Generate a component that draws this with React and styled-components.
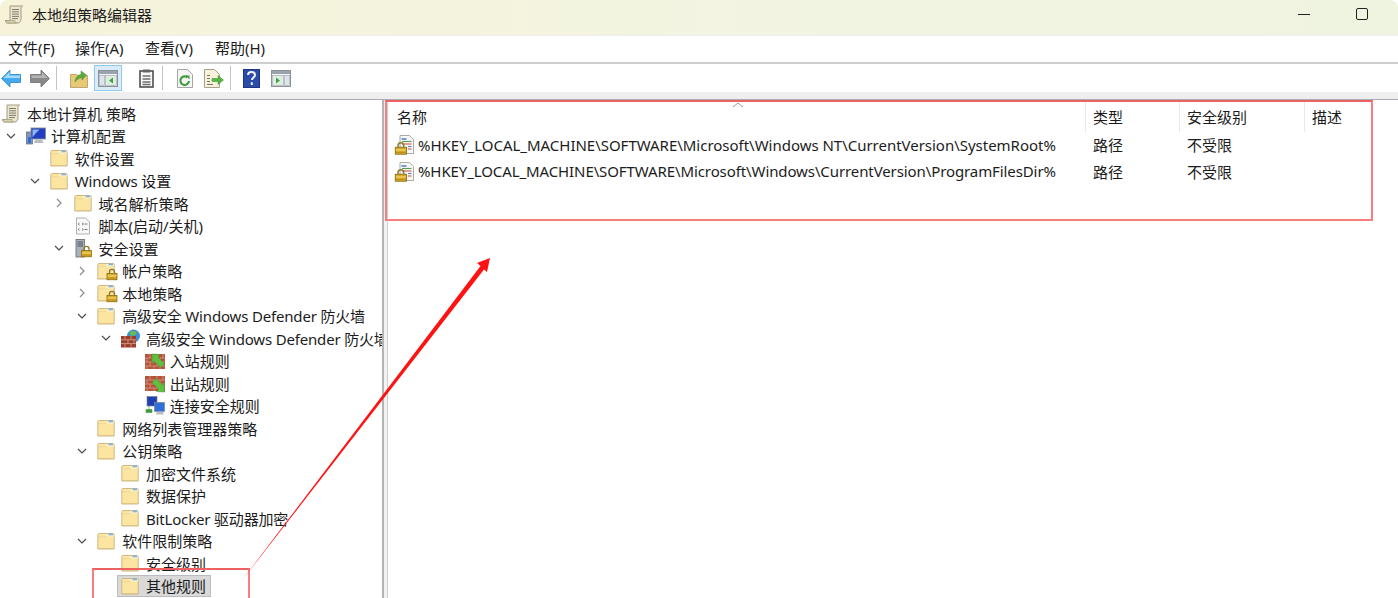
import React from "react";
import styled, {createGlobalStyle} from "styled-components";

const FONT = '"Noto Sans", "Noto Sans CJK SC", sans-serif';

const Global = createGlobalStyle`
  html, body {
    margin: 0;
    padding: 0;
    background: #fff;
  }
  * {
    box-sizing: border-box;
  }
`;

const Icon = styled.svg`
  display: block;
  flex: none;
  overflow: visible;
`;

/* icons */
const LockShape = ({x, y, s = 1}) => (
    <g transform={`translate(${x} ${y}) scale(${s})`}>
        <path d="M1.800 3V1.800a1.900 1.900 0 0 1 3.800 0V3" fill="none" stroke="#8d7a30" strokeWidth="1"/>
        <rect x="0" y="3" width="7.400" height="4.600" fill="#d9ab2a" stroke="#8a6d12" strokeWidth=".6"/>
        <path d="M.5 4.800h6.400" stroke="#f3d873" strokeWidth=".8"/>
        <path d="M.5 6.400h6.400" stroke="#b58a1a" strokeWidth=".6"/>
    </g>
);
const ScrollIcon = () => (
    <Icon width="19" height="19" viewBox="0 0 19 19">
        <path d="M5 1h12.500c-1 .8-1.500 1.800-1.500 3v10c0 2-1.200 4-3 4H2.500C1.200 18 .5 17 .5 15.500H5z" fill="#ece6cd" stroke="#96927a" strokeWidth=".9"/>
        <path d="M.5 15.500H10c0 1 .4 2 1.300 2.500H2.500C1.200 18 .5 17 .5 15.500z" fill="#d8cfa8" stroke="#96927a" strokeWidth=".6"/>
        <path d="M7 4.500h7M7 6.800h7M7 9.100h7M7 11.400h7M7 13.600h6" stroke="#7d7b6c" strokeWidth="1"/>
    </Icon>
);
const ComputerIcon = () => (
    <Icon width="20" height="18" viewBox="0 0 20 18">
        <rect x=".5" y="5" width="6" height="12" fill="#8296b8" stroke="#5a6780" strokeWidth=".7"/>
        <rect x="5" y="1" width="14.500" height="11" fill="#1f3fc0" stroke="#8a8f99" strokeWidth=".9"/>
        <path d="M6.500 2.500h7l-4 4-3 4z" fill="#8fb5f2"/>
        <path d="M9 12.500h7l1.500 3.500H8z" fill="#b7bcc4"/>
        <rect x="2" y="10" width="3" height="6" fill="#2f6fd0"/>
    </Icon>
);
const FolderIcon = ({lock}) => (
    <Icon width="18" height="18" viewBox="0 0 18 18">
        <path d="M.8 3c0-1 .5-1.500 1.200-1.500h14c.7 0 1.200.5 1.200 1.500v14H.8z" fill="#fbe5a0" stroke="#c9b27c" strokeWidth=".9"/>
        <path d="M1.300 4.500h15.400V3c0-.6-.3-1-.8-1H9.800L8.500 4z" fill="#fdf4cf"/>
        <path d="M1.300 4.700h8l1-1.200" fill="none" stroke="#e2cd8f" strokeWidth=".6"/>
        <path d="M11.500 1.500h4.500v1.800h-4.500z" fill="#7fb2dc"/>
        <path d="M1.300 16h15.400v.7H1.300z" fill="#d9c283"/>
        {lock && <LockShape x={10} y={7.500} s={1.350}/>}
    </Icon>
);
const ScriptIcon = () => (
    <Icon width="18" height="18" viewBox="0 0 18 18">
        <path d="M2.500 1h9l4 4v12h-13z" fill="#f8f8f8" stroke="#a8a8a8" strokeWidth=".9"/>
        <path d="M5.500 6L4 7l1.500 1M8 6l1.500 1L8 8M5.500 11.500L4 12.500l1.500 1M8 11.500l1.500 1-1.500 1" fill="none" stroke="#6a6f78" strokeWidth=".8"/>
        <path d="M10.500 7h3M10.500 12.500h3" stroke="#6a6f78" strokeWidth=".9"/>
    </Icon>
);
const SecurityIcon = () => (
    <Icon width="18" height="18" viewBox="0 0 18 18">
        <rect x="2" y="0.500" width="8.500" height="17.500" fill="#a9b1bb" stroke="#5f6873" strokeWidth=".8"/>
        <path d="M3.500 3h5.500M3.500 5h5.500M3.500 7h5.500" stroke="#3f4751" strokeWidth=".9"/>
        <LockShape x={7.500} y={7.500} s={1.350}/>
    </Icon>
);
const Bricks = () => (
    <g>
        <rect x="0" y="2" width="20" height="15" fill="#b5533b"/>
        <path d="M0 6h20M0 10h20M0 14h20M5 2v4M12 2v4M18 2v4M2 6v4M9 6v4M15 6v4M5 10v4M12 10v4M18 10v4M2 14v3M9 14v3M15 14v3" stroke="#d9a58f" strokeWidth=".7"/>
    </g>
);
const GlobeFirewallIcon = () => (
    <Icon width="20" height="19" viewBox="0 0 20 19">
        <circle cx="12.500" cy="7" r="6.500" fill="#3b8fdc"/>
        <path d="M9 2.500c2-1.500 4 .5 6-.5 1.500 2.500-1 4-2.500 5-2.500 0-4-1.500-3.500-4.500z" fill="#6cbb45"/>
        <rect x="0" y="7" width="15" height="11.500" fill="#9b3d2b"/>
        <path d="M0 10.800h15M0 14.600h15M4 7v3.800M10 7v3.800M7 10.800v3.800M13 10.800v3.800M4 14.600v3.900M10 14.600v3.900" stroke="#d8a68f" strokeWidth=".8"/>
    </Icon>
);
const RuleInIcon = () => (
    <Icon width="20" height="18" viewBox="0 0 20 18">
        <Bricks/>
        <path d="M7 2l8 .5-2 2.500 6.500 6.500-4 4-6.500-6.500-2 2.500z" fill="#5fbf3f" stroke="#3c8a2c" strokeWidth=".5"/>
    </Icon>
);
const RuleOutIcon = () => (
    <Icon width="20" height="18" viewBox="0 0 20 18">
        <Bricks/>
        <path d="M19.500 18l-8-.5 2-2.500L7 8.500l4-4 6.500 6.500 2-2.500z" fill="#5fbf3f" stroke="#3c8a2c" strokeWidth=".5"/>
    </Icon>
);
const ConnectionIcon = () => (
    <Icon width="20" height="19" viewBox="0 0 20 19">
        <rect x="2" y=".5" width="10" height="9.500" fill="#1f3fb0" stroke="#7c8796" strokeWidth=".7"/>
        <rect x="9.500" y="6.500" width="10" height="9" fill="#2f70d8" stroke="#7c8796" strokeWidth=".7"/>
        <path d="M12 15.800h6l1 2.700h-8z" fill="#b8bcc2"/>
        <path d="M1 13.500h6v3H1zM4 10v3.500" fill="#3f9a3a" stroke="#3f9a3a" strokeWidth=".6"/>
    </Icon>
);
const DocLockIcon = () => (
    <Icon width="19" height="19" viewBox="0 0 19 19">
        <path d="M5 .5h9.500l4 4v14H5z" fill="#f7f7f7" stroke="#a2a2a2" strokeWidth=".9"/>
        <path d="M6.500 4h5" stroke="#2d6fc0" strokeWidth="1.300"/>
        <path d="M7 6.500h9.500" stroke="#5d9c4f" strokeWidth="1.100"/>
        <path d="M7 9h9.500" stroke="#c95b4e" strokeWidth="1.100"/>
        <path d="M13 11.500h3.500" stroke="#5d7fc0" strokeWidth="1.100"/>
        <path d="M13 14h3.500" stroke="#c95b4e" strokeWidth="1.100"/>
        <LockShape x={.3} y={7.800} s={1.500}/>
    </Icon>
);
const Chevron = ({open}) => (
    <Icon width="10" height="10" viewBox="0 0 10 10">
        {open
            ? <path d="M1 3l4 4 4-4" fill="none" stroke="#4a4a4a" strokeWidth="1.200"/>
            : <path d="M3 1l4 4-4 4" fill="none" stroke="#8c8c8c" strokeWidth="1.200"/>}
    </Icon>
);

/* toolbar icons */
const BackIcon = () => (
    <Icon width="20" height="19" viewBox="0 0 20 19">
        <path d="M.5 9.500L9 1v4.500h10.500v8H9V18z" fill="#45a9ee" stroke="#2a85c8" strokeWidth=".8"/>
        <path d="M2.500 9L8.500 3v3.500h10.500v2.500z" fill="#a4dbfa"/>
    </Icon>
);
const ForwardIcon = () => (
    <Icon width="20" height="19" viewBox="0 0 20 19">
        <path d="M19.500 9.500L11 1v4.500H.5v8H11V18z" fill="#8a8a8a" stroke="#6c6c6c" strokeWidth=".8"/>
        <path d="M1.500 6.500H12V3l5.500 6H1.500z" fill="#b5b5b5"/>
    </Icon>
);
const FolderUpIcon = () => (
    <Icon width="18" height="19" viewBox="0 0 18 19">
        <path d="M.5 5.500h6l1.500 1h9.500v12H.5z" fill="#e8c877" stroke="#b39a58" strokeWidth=".8"/>
        <path d="M5 13c.3-4 2.500-7 6-7.500V2l5.500 4-4.500 5V8.500C9 9 7 10.500 5 13z" fill="#5aa93f" stroke="#3f8a2a" strokeWidth=".5"/>
    </Icon>
);
const PaneIcon = ({right}) => (
    <Icon width="20" height="17" viewBox="0 0 20 17">
        <rect x=".5" y=".5" width="19" height="16" fill="#f4f4f4" stroke="#8c9298"/>
        <rect x="1" y="1" width="18" height="3" fill="#9aa3ad"/>
        {right ? (
            <>
                <rect x="1.500" y="5.500" width="11" height="10" fill="#dfeee0" stroke="#9aa3ad" strokeWidth=".6"/>
                <rect x="13.500" y="5.500" width="5" height="10" fill="#dce6ea" stroke="#9aa3ad" strokeWidth=".6"/>
                <path d="M5 7.500l4 3-4 3z" fill="#3da24a"/>
            </>
        ) : (
            <>
                <rect x="1.500" y="5.500" width="5" height="10" fill="#dce6ea" stroke="#9aa3ad" strokeWidth=".6"/>
                <rect x="7.500" y="5.500" width="11" height="10" fill="#dfeee0" stroke="#9aa3ad" strokeWidth=".6"/>
                <path d="M15 7.500l-4 3 4 3z" fill="#3da24a"/>
            </>
        )}
    </Icon>
);
const ClipboardIcon = () => (
    <Icon width="15" height="19" viewBox="0 0 15 19">
        <rect x="1" y="2" width="13" height="16" fill="#fafafa" stroke="#4f4f4f" strokeWidth="1.600"/>
        <rect x="4" y=".5" width="7" height="3" fill="#666"/>
        <path d="M3.500 7h8M3.500 10h8M3.500 13h8M3.500 15.500h8" stroke="#6e6e6e" strokeWidth="1.300"/>
    </Icon>
);
const RefreshIcon = () => (
    <Icon width="16" height="19" viewBox="0 0 16 19">
        <path d="M.5.5h10l5 5v13H.5z" fill="#f5f5f5" stroke="#a5a5a5"/>
        <path d="M12 12a4.300 4.300 0 1 1-1.500-3.600" fill="none" stroke="#3f9d3f" strokeWidth="2.200"/>
        <path d="M8.500 6.500h4v4z" fill="#3f9d3f"/>
    </Icon>
);
const ExportIcon = () => (
    <Icon width="20" height="19" viewBox="0 0 20 19">
        <path d="M.5.500h10l5 5v13H.5z" fill="#f6f2dc" stroke="#a5a28c"/>
        <path d="M3 6.500h3M3 9.500h3M3 12.500h3M3 15.500h6" stroke="#77766a"/>
        <path d="M8 9.500h6v-3l5.500 4.500-5.500 4.500v-3H8z" fill="#58b344" stroke="#3d8f2e" strokeWidth=".5"/>
    </Icon>
);
const HelpIcon = () => (
    <Icon width="17" height="19" viewBox="0 0 17 19">
        <rect x=".5" y=".5" width="16" height="18" fill="#2b4ba8" stroke="#1e3680"/>
        <path d="M5 6c0-2 1.500-3 3.500-3S12 4 12 6c0 2.500-3 2.500-3 5M8.800 13.300v2.700" fill="none" stroke="#f2f4fa" strokeWidth="2"/>
    </Icon>
);

/* page */
const Page = styled.div`
  position: relative;
  width: 1398px;
  height: 598px;
  overflow: hidden;
  background: #fff;
  color: #1c1c1c;
  font-family: ${FONT};
  font-size: 15px;
`;
const TitleBar = styled.div`
  display: flex;
  align-items: center;
  height: 36px;
  padding: 0 30px 7px 5px;
  border-radius: 8px 8px 0 0;
  border-bottom: 1px solid #eeeeee;
  background: linear-gradient(90deg, #f6f3d9 0%, #f2f4e2 60%, #eff4e0 100%);
`;
const TitleIcon = styled.span`
  display: flex;
  margin-right: 8px;
`;
const TitleText = styled.span`
  flex: 1;
`;
const WindowButton = styled.span`
  display: flex;
  width: 12px;
  height: ${p => p.$max ? 12 : 1}px;
  margin-left: ${p => p.$max ? 46 : 0}px;
  border: ${p => p.$max ? '1.5px solid #222' : 'none'};
  border-radius: ${p => p.$max ? 2 : 0}px;
  background: ${p => p.$max ? 'transparent' : '#222'};
`;
const MenuBar = styled.div`
  display: grid;
  grid-template-columns: 67px 70px 70px auto;
  align-items: center;
  height: 28px;
  padding: 0 8px 3px;
  border-bottom: 2px solid #cfcfcf;
`;
const ToolBar = styled.div`
  display: flex;
  align-items: center;
  height: 28px;
  padding-left: 1px;
  background: #fff;
`;
const ToolButton = styled.span`
  display: flex;
  align-items: center;
  justify-content: center;
  width: ${p => p.$w}px;
  height: 26px;
  margin-left: ${p => p.$ml || 0}px;
  padding-top: 1px;
  border: 1px solid ${p => p.$active ? '#90c8f0' : 'transparent'};
  background: ${p => p.$active ? '#d8ecfa' : 'transparent'};
`;
const ToolSep = styled.span`
  width: 1px;
  height: 24px;
  margin-left: ${p => p.$ml}px;
  background: #c4c4c4;
`;
const Strip = styled.div`
  height: 8px;
  border-bottom: 1px solid #a6adb5;
  background: #eeeeee;
`;
const Body = styled.div`
  display: grid;
  grid-template-columns: 382px 6px 1fr;
  height: 498px;
`;
const Tree = styled.div`
  overflow: hidden;
  padding-top: 2px;
  white-space: nowrap;
`;
const Row = styled.div`
  display: flex;
  align-items: center;
  height: 22.5px;
  padding-left: ${p => p.$depth ? p.$depth * 23.75 - 21.75 : 2}px;
`;
const CaretSlot = styled.span`
  display: flex;
  flex: none;
  justify-content: flex-start;
  width: 24px;
  padding-left: 4px;
`;
const Item = styled.span`
  display: flex;
  align-items: center;
  height: 22px;
  margin-left: ${p => p.$selected ? -4 : 0}px;
  padding: 0 4px 0 ${p => p.$selected ? 3 : 0}px;
  border: ${p => p.$selected ? '1px solid #bcbcbc' : 'none'};
  background: ${p => p.$selected ? '#d9d9d9' : 'transparent'};
  letter-spacing: ${p => p.$tight ? -0.17 : 0}px;
`;
const ItemIcon = styled.span`
  display: flex;
  flex: none;
  width: 18px;
  margin-right: 7px;
`;
const Splitter = styled.div`
  border-left: 2px solid #b4b4b4;
  border-right: 1px solid #d0d0d0;
  background: #f2f2f2;
`;
const List = styled.div`
  min-width: 0;
`;
const ListGrid = styled.div`
  display: grid;
  grid-template-columns: 698px 94px 125px 1fr;
`;
const HeadCell = styled.div`
  position: relative;
  display: flex;
  align-items: center;
  height: 32px;
  padding-left: ${p => p.$first ? 9 : 7}px;
  border-right: ${p => p.$last ? 'none' : '1px solid #e8e8e8'};
`;
const SortMark = styled.span`
  position: absolute;
  top: 1px;
  left: 344px;
  display: flex;
`;
const Cell = styled.div`
  display: flex;
  align-items: center;
  height: 26.500px;
  padding-bottom: 1px;
  padding-left: 7px;
  white-space: nowrap;
`;
const PathText = styled.span`
  letter-spacing: ${p => p.$spacing}px;
`;
const CellIcon = styled.span`
  display: flex;
  margin-right: 4px;
`;
const RedBox = styled.div`
  position: absolute;
  top: ${p => p.$top}px;
  left: ${p => p.$left}px;
  width: ${p => p.$width}px;
  height: ${p => p.$height}px;
  border: 2px solid #f87d7d;
  border-top-color: #ec6161;
`;
const Overlay = styled.svg`
  position: absolute;
  top: 0;
  left: 0;
  pointer-events: none;
`;

const rows = [
    {d: 0, label: '本地计算机 策略', icon: <ScrollIcon/>},
    {d: 1, open: true, label: '计算机配置', icon: <ComputerIcon/>},
    {d: 2, label: '软件设置', icon: <FolderIcon/>},
    {d: 2, open: true, tight: true, label: 'Windows 设置', icon: <FolderIcon/>},
    {d: 3, open: false, label: '域名解析策略', icon: <FolderIcon/>},
    {d: 3, label: '脚本(启动/关机)', icon: <ScriptIcon/>},
    {d: 3, open: true, label: '安全设置', icon: <SecurityIcon/>},
    {d: 4, open: false, label: '帐户策略', icon: <FolderIcon lock/>},
    {d: 4, open: false, label: '本地策略', icon: <FolderIcon lock/>},
    {d: 4, open: true, tight: true, label: '高级安全 Windows Defender 防火墙', icon: <FolderIcon/>},
    {d: 5, open: true, tight: true, key: 'fw', label: '高级安全 Windows Defender 防火墙', icon: <GlobeFirewallIcon/>},
    {d: 6, label: '入站规则', icon: <RuleInIcon/>},
    {d: 6, label: '出站规则', icon: <RuleOutIcon/>},
    {d: 6, label: '连接安全规则', icon: <ConnectionIcon/>},
    {d: 4, label: '网络列表管理器策略', icon: <FolderIcon/>},
    {d: 4, open: true, label: '公钥策略', icon: <FolderIcon/>},
    {d: 5, label: '加密文件系统', icon: <FolderIcon/>},
    {d: 5, label: '数据保护', icon: <FolderIcon/>},
    {d: 5, tight: true, label: 'BitLocker 驱动器加密', icon: <FolderIcon/>},
    {d: 4, open: true, label: '软件限制策略', icon: <FolderIcon/>},
    {d: 5, label: '安全级别', icon: <FolderIcon/>},
    {d: 5, selected: true, label: '其他规则', icon: <FolderIcon/>},
];

const paths = [
    {text: '%HKEY_LOCAL_MACHINE\\SOFTWARE\\Microsoft\\Windows NT\\CurrentVersion\\SystemRoot%', spacing: -0.02},
    {text: '%HKEY_LOCAL_MACHINE\\SOFTWARE\\Microsoft\\Windows\\CurrentVersion\\ProgramFilesDir%', spacing: -0.1},
];

function App() {
    return (
        <Page>
            <Global/>
            <TitleBar>
                <TitleIcon><ScrollIcon/></TitleIcon>
                <TitleText>本地组策略编辑器</TitleText>
                <WindowButton/>
                <WindowButton $max/>
            </TitleBar>
            <MenuBar>
                <span>文件(F)</span>
                <span>操作(A)</span>
                <span>查看(V)</span>
                <span>帮助(H)</span>
            </MenuBar>
            <ToolBar>
                <ToolButton $w={20}><BackIcon/></ToolButton>
                <ToolButton $w={20} $ml={9}><ForwardIcon/></ToolButton>
                <ToolSep $ml={6}/>
                <ToolButton $w={18} $ml={13}><FolderUpIcon/></ToolButton>
                <ToolButton $w={28} $ml={6} $active><PaneIcon/></ToolButton>
                <ToolButton $w={15} $ml={17}><ClipboardIcon/></ToolButton>
                <ToolSep $ml={8}/>
                <ToolButton $w={16} $ml={14}><RefreshIcon/></ToolButton>
                <ToolButton $w={20} $ml={11}><ExportIcon/></ToolButton>
                <ToolSep $ml={6}/>
                <ToolButton $w={17} $ml={12}><HelpIcon/></ToolButton>
                <ToolButton $w={20} $ml={11}><PaneIcon right/></ToolButton>
            </ToolBar>
            <Strip/>
            <Body>
                <Tree>
                    {rows.map(r => (
                        <Row key={r.key || r.label} $depth={r.d}>
                            {r.d > 0 && (
                                <CaretSlot>
                                    {r.open !== undefined && <Chevron open={r.open}/>}
                                </CaretSlot>
                            )}
                            <Item $selected={r.selected} $tight={r.tight}>
                                <ItemIcon>{r.icon}</ItemIcon>
                                {r.label}
                            </Item>
                        </Row>
                    ))}
                </Tree>
                <Splitter/>
                <List>
                    <ListGrid>
                        <HeadCell $first>
                            <SortMark>
                                <svg width="12" height="8" viewBox="0 0 12 8">
                                    <path d="M1 6l5-4 5 4" fill="none" stroke="#9a9a9a"/>
                                </svg>
                            </SortMark>
                            名称
                        </HeadCell>
                        <HeadCell>类型</HeadCell>
                        <HeadCell>安全级别</HeadCell>
                        <HeadCell $last>描述</HeadCell>
                        {paths.map(p => (
                            <React.Fragment key={p.text}>
                                <Cell>
                                    <CellIcon><DocLockIcon/></CellIcon>
                                    <PathText $spacing={p.spacing}>{p.text}</PathText>
                                </Cell>
                                <Cell>路径</Cell>
                                <Cell>不受限</Cell>
                                <Cell/>
                            </React.Fragment>
                        ))}
                    </ListGrid>
                </List>
            </Body>
            <RedBox $top={100} $left={385} $width={988} $height={121}/>
            <RedBox $top={568} $left={92} $width={158} $height={40}/>
            <Overlay width="1398" height="598" viewBox="0 0 1398 598">
                <polygon points="240,583 480.500,266 477,263 490,258 487,272 484,269.500" fill="#ff1212"/>
            </Overlay>
        </Page>
    );
}

export default App;
